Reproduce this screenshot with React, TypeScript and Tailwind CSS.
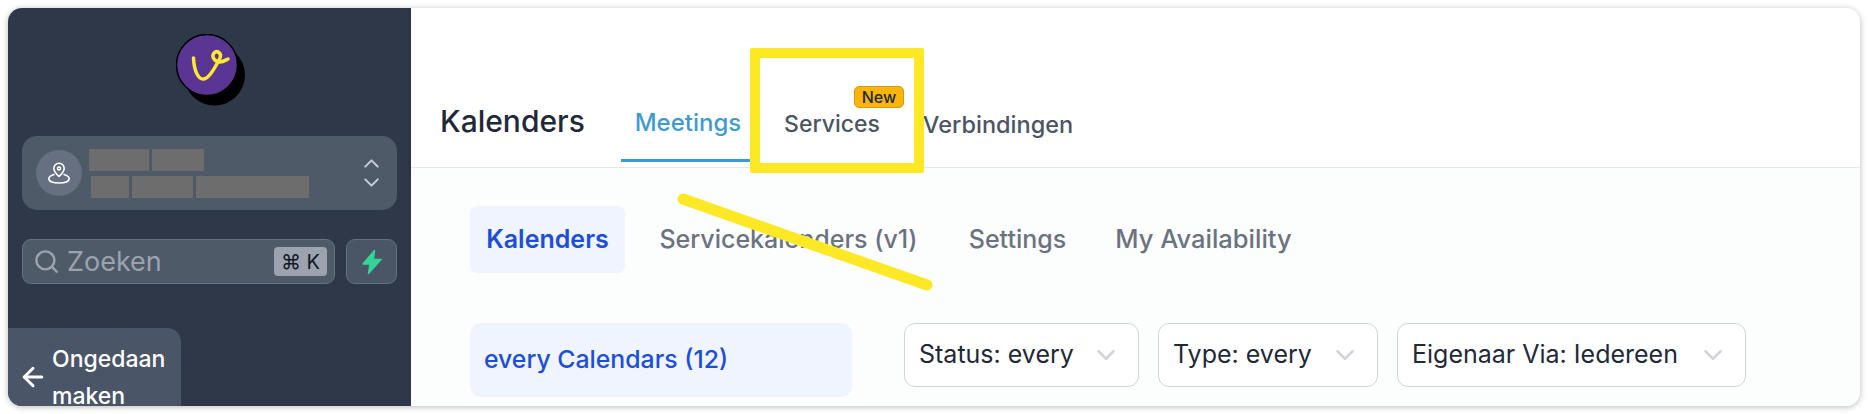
import { ArrowLeft, ChevronDown, ChevronUp, Search } from "lucide-react";

function Logo() {
  return (
    <svg width="72" height="76" viewBox="0 0 72 76" className="block">
      <circle cx="38.5" cy="41" r="30.5" fill="#000" />
      <circle cx="31" cy="31" r="30.5" fill="#5b3594" stroke="#000" strokeWidth="1.5" />
      <path
        d="M17.5 24 C18 36 22 46 28 45 C34 44 41 30 44 24 C46 19 41 16 38 19 C35 23 39 28 44 28 C47 28 50 26 52 25"
        fill="none"
        stroke="#fde92f"
        strokeWidth="3.5"
        strokeLinecap="round"
        strokeLinejoin="round"
      />
    </svg>
  );
}

function PinIcon() {
  return (
    <svg width="24" height="24" viewBox="0 0 24 24" fill="none" stroke="#fff" strokeWidth="1.6" strokeLinecap="round" strokeLinejoin="round">
      <path d="M12 15.5 C9 12.5 6.8 10.2 6.8 7.4 A5.2 5.2 0 0 1 17.2 7.4 C17.2 10.2 15 12.5 12 15.5 Z" />
      <circle cx="12" cy="7.5" r="1.5" />
      <path d="M7 13.5 C3.8 14.5 1.8 16 1.8 17.8 C1.8 20.4 6.4 22 12 22 C17.6 22 22.2 20.4 22.2 17.8 C22.2 16 20.2 14.5 17 13.5" />
    </svg>
  );
}

function Sidebar() {
  return (
    <aside className="flex w-[403px] shrink-0 flex-col bg-[#2e3849] px-[14px] pt-[26px]">
      <div className="flex h-[76px] justify-center pl-[5px]">
        <Logo />
      </div>
      <div className="mt-[26px] flex h-[74px] items-center rounded-[15px] bg-[#4f5a68] pl-[14px] pr-[13px]">
        <div className="flex h-[46px] w-[46px] shrink-0 items-center justify-center rounded-full bg-[#667080]">
          <PinIcon />
        </div>
        <div className="ml-[7px] flex flex-1 flex-col gap-[5px]">
          <div className="flex gap-[3px]">
            <div className="h-[22px] w-[60px] bg-[#6d6d6d]" />
            <div className="h-[22px] w-[52px] bg-[#6d6d6d]" />
          </div>
          <div className="ml-[2px] flex gap-[3px]">
            <div className="h-[22px] w-[38px] bg-[#6d6d6d]" />
            <div className="h-[22px] w-[61px] bg-[#6d6d6d]" />
            <div className="h-[22px] w-[113px] bg-[#6d6d6d]" />
          </div>
        </div>
        <div className="flex flex-col items-center text-[#c6ccd5]">
          <ChevronUp size={25} strokeWidth={2} className="-mb-[3px]" />
          <ChevronDown size={25} strokeWidth={2} className="-mt-[3px]" />
        </div>
      </div>
      <div className="mt-[29px] flex h-[45px] gap-[11px]">
        <div className="flex flex-1 items-center rounded-[9px] border border-[#667080] bg-[#4f5a68] pl-[10px] pr-[7px]">
          <Search size={27} strokeWidth={2.2} className="text-[#9ca3af]" />
          <span className="ml-[7px] flex-1 text-[27px] leading-none text-[#9ca3af]">Zoeken</span>
          <span className="flex h-[29px] w-[53px] items-center justify-center rounded-[4px] bg-[#9ca3af] text-[20px] text-[#111827]">⌘ K</span>
        </div>
        <div className="flex w-[51px] items-center justify-center rounded-[9px] border border-[#667080] bg-[#4a5565]">
          <svg width="20" height="24" viewBox="0 0 20 24" fill="#34d399">
            <path d="M12.5 0.5 L1 14 L8 14 L6.5 23.5 L19 9.5 L11.5 9.5 Z" stroke="#34d399" strokeWidth="1.5" strokeLinejoin="round" />
          </svg>
        </div>
      </div>
      <div className="-mx-[14px] mt-auto flex h-[78px] w-[173px] items-center overflow-hidden rounded-tr-[14px] bg-[#4a5568] pl-[10px]">
        <ArrowLeft size={30} strokeWidth={2.4} className="mt-[20px] shrink-0 text-white" />
        <span className="ml-[4px] mt-[22px] text-[23px] font-medium leading-[37px] text-white">
          Ongedaan maken
        </span>
      </div>
    </aside>
  );
}

function Header() {
  return (
    <header className="flex h-[160px] shrink-0 items-end border-b border-[#e5e7eb] bg-white pl-[29px] shadow-[0_2px_5px_rgba(0,0,0,0.16)]">
      <h1 className="mb-[26px] w-[181px] text-[30px] font-medium leading-[40px] text-[#1f2937]">Kalenders</h1>
      <div className="mb-[5px] flex gap-[14px]">
        <div className="flex h-[73px] w-[134px] items-center justify-center border-b-[3px] border-[#3f9bcf] pb-[2px] text-[24px] font-medium text-[#3f9bcf]">Meetings</div>
        <div className="relative flex h-[73px] w-[126px] items-center justify-center pb-[2px] text-[23px] font-medium text-[#4b5563]">
          Services
          <span className="absolute -top-[3px] left-[85px] flex h-[22px] w-[50px] items-center justify-center rounded-[5px] border border-[#d89a0a] bg-[#fbb40b] text-[16px] font-medium text-[#1f2937]">New</span>
        </div>
        <div className="flex h-[73px] w-[178px] items-center justify-center pb-[2px] text-[23.5px] font-medium text-[#4b5563]">Verbindingen</div>
      </div>
    </header>
  );
}

function Select({ label, width }: { label: string; width: string }) {
  return (
    <div className={`flex h-[64px] items-center justify-between rounded-[11px] border border-[#d1d5db] bg-white pl-[14px] pr-[17px] text-[25px] text-[#1f2937] ${width}`}>
      <span>{label}</span>
      <ChevronDown size={30} strokeWidth={2} className="text-[#d1d5db]" />
    </div>
  );
}

function Content() {
  return (
    <main className="flex-1 bg-[#fcfdfd] pl-[59px] pt-[38px]">
      <nav className="flex gap-[17px] text-[25px] font-medium text-[#6b7280]">
        <div className="flex h-[67px] w-[155px] items-center justify-center rounded-[7px] bg-[#eff4fe] font-semibold text-[#1d4ed8]">Kalenders</div>
        <div className="flex h-[67px] w-[293px] items-center justify-center">Servicekalenders (v1)</div>
        <div className="flex h-[67px] w-[131px] items-center justify-center">Settings</div>
        <div className="flex h-[67px] w-[207px] items-center justify-center text-[25.5px]">My Availability</div>
      </nav>
      <div className="mt-[50px] flex">
        <div className="flex h-[74px] w-[382px] items-center rounded-[11px] bg-[#eff4fe] pl-[14px] text-[24.8px] font-medium text-[#1d4ed8]">every Calendars (12)</div>
        <div className="ml-[52px] flex gap-[19px]">
          <Select label="Status: every" width="w-[235px]" />
          <Select label="Type: every" width="w-[220px]" />
          <Select label="Eigenaar Via: Iedereen" width="w-[349px]" />
        </div>
      </div>
    </main>
  );
}

export default function App() {
  return (
    <div className="relative h-[414px] w-[1868px] overflow-hidden bg-white p-2 font-['Inter',sans-serif]">
      <div className="flex h-[398px] w-[1852px] overflow-hidden rounded-[14px] bg-white shadow-[0_1px_6px_rgba(0,0,0,0.28)]">
        <Sidebar />
        <div className="flex min-w-0 flex-1 flex-col">
          <Header />
          <Content />
        </div>
      </div>
      <div className="absolute left-[750px] top-[48px] h-[125px] w-[174px] rounded-[2px] border-[10px] border-[#fde825]" />
      <svg className="absolute left-[670px] top-[190px]" width="270" height="105" viewBox="0 0 270 105">
        <line x1="13" y1="9" x2="257" y2="95" stroke="#fde825" strokeWidth="11" strokeLinecap="round" />
      </svg>
    </div>
  );
}
